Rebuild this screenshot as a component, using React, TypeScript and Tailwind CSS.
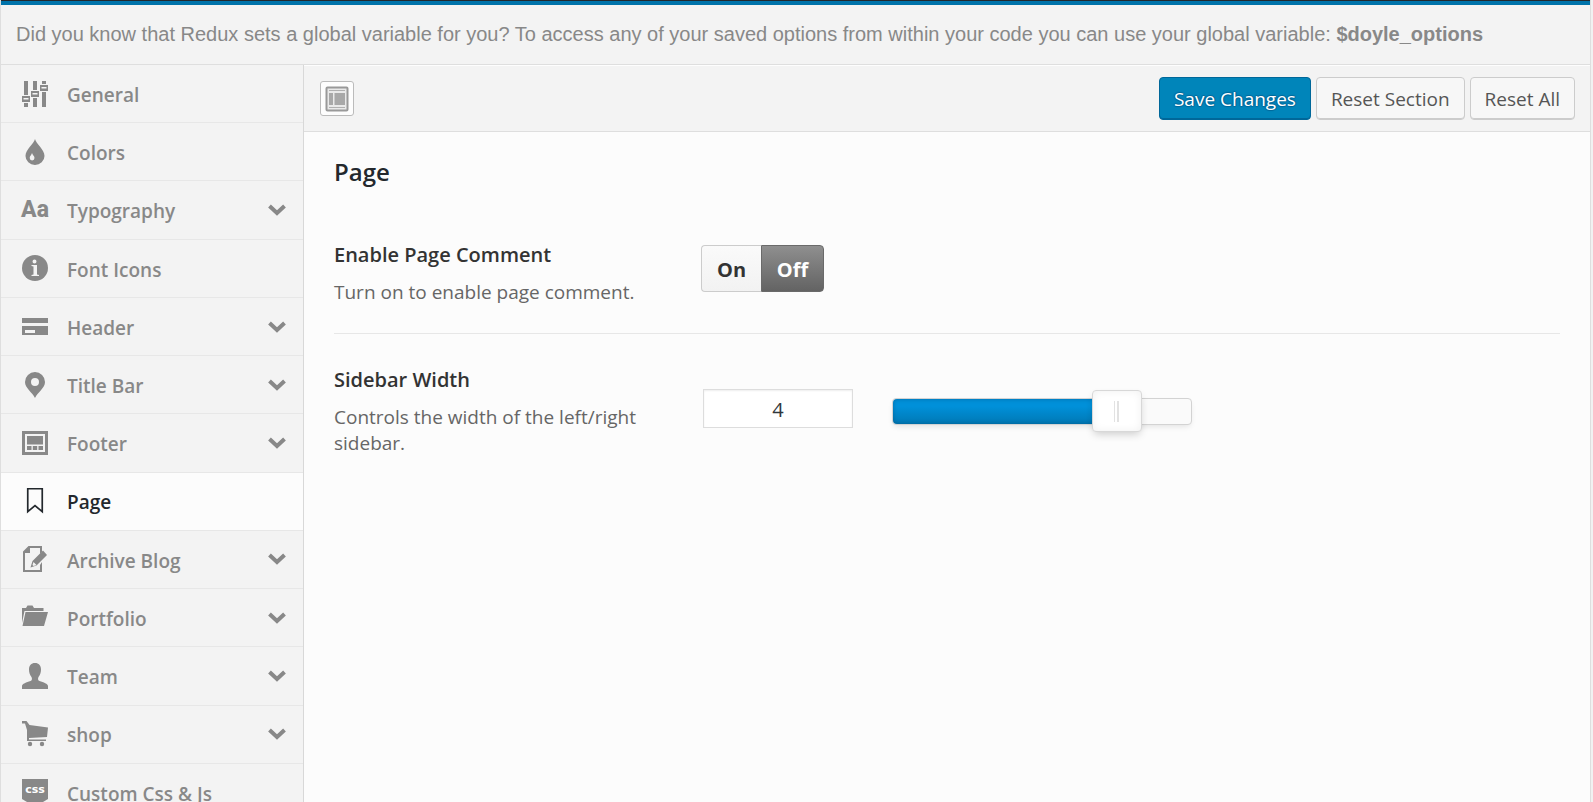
import React, { useState } from "react";

const ICONS: Record<string, React.ReactNode> = {
  general: (
    <>
      <path d="M2 0h4v14H2zM2 22h4v4H2zM0 15h8v6H0zM11 0h4v9h-4zM11 17h4v9h-4zM9 10h8v6H9zM20 0h4v3h-4zM20 11h4v15h-4zM18 4h8v6h-8z" />
      <path d="M1.500 17h5v1.500h-5zM10.500 12h5v1.500h-5zM19.500 6h5v1.500h-5z" className="fill-[#f3f3f3]" />
    </>
  ),
  colors: (
    <>
      <path d="M13 0c1 4.500 9.500 10.500 9.500 17a9.500 9 0 0 1-19 0C3.500 10.500 12 4.500 13 0z" />
      <path d="M10 14c.4 1.700 2.500 3 2.500 5a2.400 2.400 0 0 1-4.800 0c0-2 1.900-3.300 2.300-5z" className="fill-[#f3f3f3]" />
    </>
  ),
  info: (
    <>
      <circle cx="13" cy="13" r="13" />
      <path d="M12.500 4.500a2 2 0 1 1 0 4 2 2 0 0 1 0-4zM9.500 10h5.500v9.500l2 .5v1H9.500v-1l2-.5v-8l-2-.5z" className="fill-[#f3f3f3]" />
    </>
  ),
  header: <path fillRule="evenodd" d="M0 4h26v5H0zM0 12h26v9H0zM3 16v3h10v-3z" />,
  pin: <path fillRule="evenodd" d="M13 0a10 10 0 0 1 10 10c0 6-7 10-10 16C10 20 3 16 3 10A10 10 0 0 1 13 0zm0 6a4 4 0 1 0 0 8 4 4 0 0 0 0-8z" />,
  footer: (
    <path fillRule="evenodd" d="M0 1h26v24H0zM3 4v18h20V4zM5 6h16v8.500H5zM5 16h4.500v4H5zM10.800 16h4.400v4h-4.400zM16.500 16H21v4h-4.500z" />
  ),
  page: <path d="M5.750 .75h14.500v23L13 17.500l-7.250 6.250z" className="fill-none stroke-current stroke-[1.700]" />,
  blog: (
    <>
      <path fillRule="evenodd" d="M6.500 0H20v6l-2 2V2H8v5H3v17h15v-5l2-3v10H1V5.500z" />
      <path fillRule="evenodd" d="M21 4.500l4 4.500-10.500 10.500-6 2 2-6.500zM11.500 16l-1 3 1 1 3-1z" />
    </>
  ),
  folder: <path d="M0 3h4l1.500-2.500h5L12 3h9.500v3H2.500L0 18zM3.500 7H26l-4 14H.5z" />,
  team: <path d="M13 0c3.800 0 6 2.500 6 6.500 0 3-1 5.500-2.500 7.500-.8 1.500-.5 3.500 1 4 4 1.500 8.500 2.500 8.500 5V26H0v-3c0-2.500 4.500-3.500 8.500-5 1.500-.5 1.800-2.500 1-4C8 12 7 9.500 7 6.500 7 2.500 9.200 0 13 0z" />,
  shop: (
    <>
      <path d="M0 0h4.500L7.500 4 26 6.500 25 16l-18 1v1.500h17V20H5V9L3 2.500H0z" />
      <circle cx="8" cy="23" r="2.200" />
      <circle cx="20" cy="23" r="2.200" />
    </>
  ),
};

const ITEMS: { label: string; icon: string; sub?: boolean }[] = [
  { label: "General", icon: "general" },
  { label: "Colors", icon: "colors" },
  { label: "Typography", icon: "type", sub: true },
  { label: "Font Icons", icon: "info" },
  { label: "Header", icon: "header", sub: true },
  { label: "Title Bar", icon: "pin", sub: true },
  { label: "Footer", icon: "footer", sub: true },
  { label: "Page", icon: "page" },
  { label: "Archive Blog", icon: "blog", sub: true },
  { label: "Portfolio", icon: "folder", sub: true },
  { label: "Team", icon: "team", sub: true },
  { label: "shop", icon: "shop", sub: true },
  { label: "Custom Css & Js", icon: "css" },
];

function ItemIcon({ name }: { name: string }) {
  if (name === "type") {
    return (
      <span aria-hidden="true" className="flex w-[26px] shrink-0 justify-center font-[Roboto,sans-serif] text-[23px] leading-[26px] font-extrabold">
        Aa
      </span>
    );
  }
  if (name === "css") {
    return (
      <svg viewBox="0 0 26 26" className="h-[26px] w-[26px] shrink-0 fill-current" aria-hidden="true">
        <path d="M0 0h26v20l-5 3-8 3-8-3-5-3z" />
        <text x="13" y="14" textAnchor="middle" className="fill-white font-['DejaVu_Sans',sans-serif] text-[11px] font-bold">css</text>
      </svg>
    );
  }
  return (
    <svg viewBox="0 0 26 26" className="h-[26px] w-[26px] shrink-0 fill-current" aria-hidden="true">
      {ICONS[name]}
    </svg>
  );
}

const button =
  "h-[43px] rounded-[4px] border px-[14px] text-[19px] leading-[38px]";

export default function App() {
  const [active, setActive] = useState("Page");
  const [on, setOn] = useState(false);
  const [width, setWidth] = useState(4);
  const share = (width - 1) / 4;

  return (
    <div className="h-screen overflow-y-auto bg-[#f1f1f1] pr-[2px] font-['Open_Sans','Noto_Sans',sans-serif] [scrollbar-width:none]">
      <div className="flex min-h-full flex-col border-x border-[#dedede] bg-[#f3f3f3]">
        <div className="h-[5px] shrink-0 border-t border-[#23282d] bg-[#0073aa]" />
        <p className="border-b border-[#dedede] px-[15px] pt-[15px] pb-[16px] font-['Liberation_Sans',Arial,sans-serif] text-[20px] leading-[28px] text-[#888888]">
          Did you know that Redux sets a global variable for you? To access any of your saved options from within your code you can use your global variable: <strong>$doyle_options</strong>
        </p>
        <div className="flex flex-1">
          <nav className="grid min-h-[757px] w-[303px] shrink-0 auto-rows-fr border-r border-[#d8d8d8]">
            {ITEMS.map(({ label, icon, sub }) => (
              <a
                key={label}
                href="#"
                onClick={(e) => {
                  e.preventDefault();
                  setActive(label);
                }}
                className={
                  "flex items-center border-b border-[#e7e7e7] pr-[17px] pl-[21px] text-[19px] font-semibold " +
                  (active === label ? "bg-[#fcfcfc] text-[#23282d]" : "text-[#888888]")
                }
              >
                <ItemIcon name={icon} />
                <span className="ml-[19px] flex-1 pt-[3px]">{label}</span>
                {sub && (
                  <svg viewBox="0 0 18 12" className="h-[12px] w-[18px] fill-none stroke-current stroke-[4]" aria-hidden="true">
                    <path d="M1.500 2 9 9 16.500 2" />
                  </svg>
                )}
              </a>
            ))}
          </nav>
          <main className="min-w-0 flex-1 bg-[#fcfcfc]">
            <div className="flex items-center justify-between border-t border-b border-t-[#fdfdfd] border-b-[#dedede] bg-[#f3f3f3] px-[15px] py-[11px]">
              <button aria-label="Expand options" className="ml-px flex h-[35px] w-[34px] items-center justify-center rounded-[3px] border border-[#bbbbbb] bg-[#fdfdfd]">
                <svg viewBox="0 0 24 26" className="h-[26px] w-[24px]" aria-hidden="true">
                  <rect x="1.500" y="1.500" width="21" height="23" rx="1" className="fill-[#e9e9e9] stroke-[#999999] stroke-2" />
                  <path d="M4 4.500h16M4 21.500h16" className="stroke-[#b0b0b0]" />
                  <path d="M4 7h4v12H4zM9.500 7H20v12H9.500z" className="fill-[#a8a8a8]" />
                </svg>
              </button>
              <div className="flex gap-[5px]">
                <button className={button + " border-[#006799] bg-[#0085ba] text-white shadow-[inset_0_-1px_0_#006799] [text-shadow:0_-1px_1px_#006799,1px_0_1px_#006799,0_1px_1px_#006799,-1px_0_1px_#006799]"}>Save Changes</button>
                <button className={button + " border-[#cccccc] bg-[#f7f7f7] text-[#555555] shadow-[inset_0_-1px_0_#cccccc]"}>Reset Section</button>
                <button className={button + " border-[#cccccc] bg-[#f7f7f7] text-[#555555] shadow-[inset_0_-1px_0_#cccccc]"}>Reset All</button>
              </div>
            </div>
            <div className="px-[30px] pt-[23px]">
              <h1 className="text-[24px] leading-[34px] font-semibold text-[#23282d]">Page</h1>
              <div className="flex border-b border-[#e7e7e7] pt-[52px] pb-[28px]">
                <div className="w-[367px] shrink-0">
                  <h2 className="text-[20px] leading-[28px] font-semibold text-[#333333]">Enable Page Comment</h2>
                  <p className="mt-[10px] text-[19px] leading-[26px] text-[#666666]">Turn on to enable page comment.</p>
                </div>
                <div className="mt-[4px] flex h-[47px] text-[20px] font-bold">
                  <button aria-pressed={on} onClick={() => setOn(true)} className="w-[60px] rounded-l-[4px] border border-r-0 border-[#cccccc] bg-linear-to-b from-[#fafafa] to-[#f2f2f2] pt-[3px] text-[#333333]">On</button>
                  <button aria-pressed={!on} onClick={() => setOn(false)} className="w-[63px] rounded-r-[4px] border border-[#6a6a6a] bg-linear-to-b from-[#8f8f8f] to-[#636363] pt-[3px] text-white">Off</button>
                </div>
              </div>
              <div className="flex pt-[32px]">
                <div className="w-[369px] shrink-0 pr-[50px]">
                  <h2 className="text-[20px] leading-[28px] font-semibold text-[#333333]">Sidebar Width</h2>
                  <p className="mt-[10px] text-[19px] leading-[26px] text-[#666666]">Controls the width of the left/right sidebar.</p>
                </div>
                <input
                  aria-label="Sidebar Width"
                  value={width}
                  onChange={(e) => setWidth(Math.min(5, Math.max(1, Number(e.target.value) || 1)))}
                  className="mt-[23px] h-[39px] w-[150px] border border-[#dddddd] bg-white pt-[2px] text-center text-[20px] text-[#32373c] shadow-[inset_0_1px_2px_rgba(0,0,0,0.07)]"
                />
                <div className="relative mt-[32px] ml-[39px] h-[27px] w-[300px] rounded-[4px] border border-[#d3d3d3] bg-[#fafafa] shadow-[0_3px_6px_-2px_rgba(0,0,0,0.12)]">
                  <div
                    className="h-full rounded-l-[4px] bg-linear-to-b from-[#0090d9] from-30% to-[#0078b4] shadow-[inset_0_0_4px_rgba(0,60,100,0.4)]"
                    style={{ width: `${share * 100}%` }}
                  />
                  <input
                    type="range"
                    min={1}
                    max={5}
                    value={width}
                    aria-label="Sidebar Width slider"
                    onChange={(e) => setWidth(Number(e.target.value))}
                    className="absolute inset-0 m-0 h-full w-full cursor-pointer opacity-0"
                  />
                  <span
                    className="pointer-events-none absolute -top-[9px] -ml-[25px] flex h-[42px] w-[50px] items-center justify-center gap-[2px] rounded-[4px] border border-[#d8d8d8] bg-white shadow-[0_4px_8px_-2px_rgba(0,0,0,0.2),inset_0_0_8px_#f0f0f0]"
                    style={{ left: `${share * 100}%` }}
                  >
                    <i className="h-[21px] w-px bg-[#e2e2e2]" />
                    <i className="h-[21px] w-[2px] bg-[#e2e2e2]" />
                  </span>
                </div>
              </div>
            </div>
          </main>
        </div>
      </div>
    </div>
  );
}
